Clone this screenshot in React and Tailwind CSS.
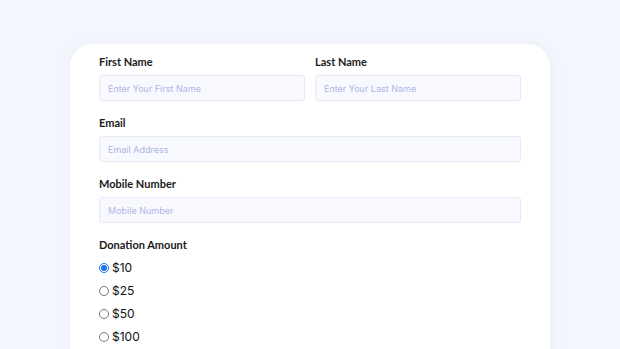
import React from 'react';

function Field({ label, placeholder, className = '' }) {
  return (
    <div className={`flex flex-col ${className}`}>
      <label className="text-[11px] font-bold leading-[14px] text-[#1a1a1a] mb-[6px]">{label}</label>
      <input
        type="text"
        placeholder={placeholder}
        className="h-[26px] w-full rounded-[3px] border border-[#e5eaf4] bg-[#f7f9ff] px-[8px] text-[9px] font-['Inter',sans-serif] outline-none placeholder:text-[#aeb6e4]"
      />
    </div>
  );
}

export default function App() {
  const amounts = ['$10', '$25', '$50', '$100'];

  return (
    <div className="h-[349px] w-full overflow-hidden bg-[#f4f6fd] pt-[44px] font-['Lato',sans-serif]">
      <div className="mx-[70px] h-[400px] rounded-t-[22px] bg-white px-[29px] pt-[11px] shadow-[0_0_12px_rgba(180,190,230,0.15)]">
        <div className="flex flex-col gap-[15px]">
          <div className="flex gap-[10px]">
            <Field label="First Name" placeholder="Enter Your First Name" className="flex-1" />
            <Field label="Last Name" placeholder="Enter Your Last Name" className="flex-1" />
          </div>
          <Field label="Email" placeholder="Email Address" />
          <Field label="Mobile Number" placeholder="Mobile Number" />
          <div className="flex flex-col">
            <span className="text-[11px] font-bold leading-[14px] text-[#1a1a1a] mb-[9px]">Donation Amount</span>
            <div className="flex flex-col gap-[9px]">
              {amounts.map((a, i) => (
                <label key={a} className="flex items-center gap-[3px] text-[12px] leading-[14px] text-[#111] font-['Inter',sans-serif]">
                  <input
                    type="radio"
                    name="amount"
                    defaultChecked={i === 0}
                    className="m-0 h-[10px] w-[10px] accent-[#1a73e8]"
                  />
                  {a}
                </label>
              ))}
            </div>
          </div>
        </div>
      </div>
    </div>
  );
}
